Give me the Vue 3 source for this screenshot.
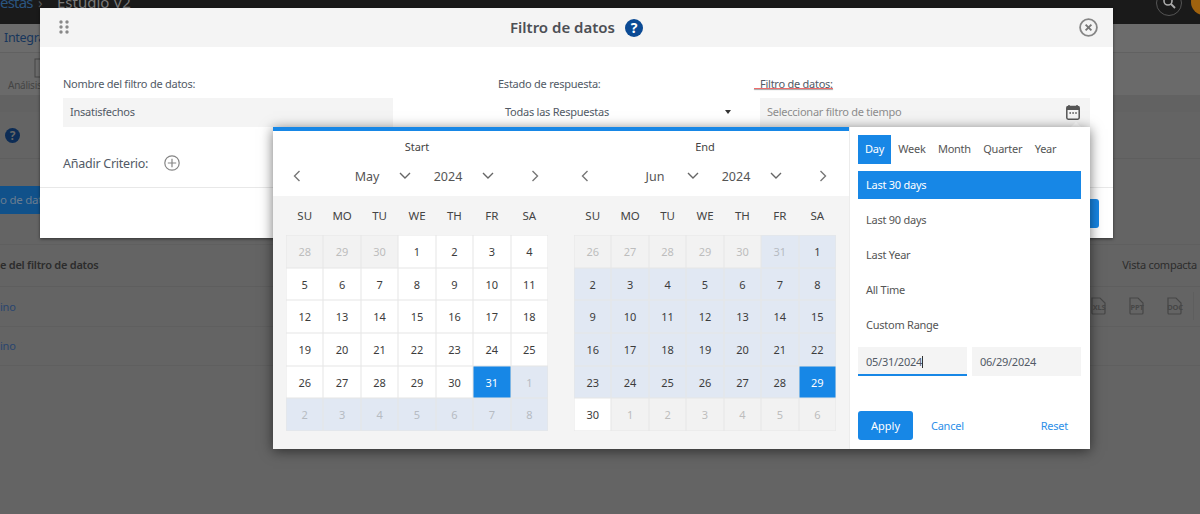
<script setup>
const weekdays = ['SU', 'MO', 'TU', 'WE', 'TH', 'FR', 'SA']
const may = [
  ...[28, 29, 30].map(d => ({ d, k: 'off' })),
  ...Array.from({ length: 30 }, (_, i) => ({ d: i + 1, k: '' })),
  { d: 31, k: 'sel' },
  ...[1, 2, 3, 4, 5, 6, 7, 8].map(d => ({ d, k: 'range faint' }))
]
const june = [
  ...[26, 27, 28, 29, 30].map(d => ({ d, k: 'off' })),
  { d: 31, k: 'range faint' },
  ...Array.from({ length: 28 }, (_, i) => ({ d: i + 1, k: 'range' })),
  { d: 29, k: 'sel' },
  { d: 30, k: '' },
  ...[1, 2, 3, 4, 5, 6].map(d => ({ d, k: 'off' }))
]
const calendars = [
  { title: 'Start', month: 'May', days: may },
  { title: 'End', month: 'Jun', days: june }
]
const tabs = ['Day', 'Week', 'Month', 'Quarter', 'Year']
const ranges = ['Last 30 days', 'Last 90 days', 'Last Year', 'All Time', 'Custom Range']
const fileTypes = ['XLS', 'PPT', 'DOC']
</script>

<template>
  <div class="page">
    <div class="topbar">
      <span class="crumb">estas</span>
      <span class="crumb-sep">›</span>
      <span class="crumb-current">Estudio V2</span>
      <svg class="search" viewBox="0 0 26 26" width="26" height="26">
        <circle cx="13" cy="13" r="12.5" fill="none" stroke="#555" />
        <circle cx="12" cy="11" r="4" fill="none" stroke="#aaa" stroke-width="1.6" />
        <path d="M15 14l4 4" stroke="#aaa" stroke-width="1.8" />
      </svg>
      <span class="avatar"></span>
    </div>
    <div class="band-title">Integraciones</div>
    <div class="band-tabs">
      <svg width="12" height="20" viewBox="0 0 12 20"><rect x="1" y="1" width="9" height="18" fill="none" stroke="#444" /></svg>
      <span>Análisis</span>
    </div>
    <div class="band-help"><span class="help-dark">?</span></div>
    <div class="band-action"><span class="action-btn">o de datos</span></div>
    <div class="table-head"><span>e del filtro de datos</span><span class="compact">Vista compacta</span></div>
    <div class="table-row">
      <span class="link">ino</span>
      <div class="files">
        <svg v-for="f in fileTypes" :key="f" class="file" width="17" height="18" viewBox="0 0 17 18">
          <path d="M2 1h8l5 5v10a1 1 0 0 1-1 1H3a1 1 0 0 1-1-1z" fill="none" stroke="#474747" stroke-width="1.2" />
          <text x="9" y="13" text-anchor="middle" class="file-label">{{ f }}</text>
        </svg>
      </div>
    </div>
    <div class="table-row"><span class="link">ino</span></div>

    <div class="modal">
      <header class="modal-head">
        <svg class="grip" width="10" height="14" viewBox="0 0 10 14">
          <g fill="#888">
            <circle cx="2" cy="2" r="1.7" /><circle cx="8" cy="2" r="1.7" />
            <circle cx="2" cy="7" r="1.7" /><circle cx="8" cy="7" r="1.7" />
            <circle cx="2" cy="12" r="1.7" /><circle cx="8" cy="12" r="1.7" />
          </g>
        </svg>
        <h1 class="modal-title">Filtro de datos</h1>
        <span class="help">?</span>
        <svg class="close" width="19" height="19" viewBox="0 0 19 19">
          <circle cx="9.5" cy="9.5" r="8.4" fill="none" stroke="#868686" stroke-width="1.8" />
          <path d="M6.6 6.6l5.8 5.8M12.4 6.6l-5.8 5.8" stroke="#777" stroke-width="1.9" />
        </svg>
      </header>
      <div class="fields">
        <div class="field">
          <label>Nombre del filtro de datos:</label>
          <div class="input">Insatisfechos</div>
        </div>
        <div class="field field-mid">
          <label>Estado de respuesta:</label>
          <div class="select"><span>Todas las Respuestas</span><i class="caret"></i></div>
        </div>
        <div class="field">
          <label><span class="underlined">Filtro de datos:</span></label>
          <div class="input placeholder">
            <span>Seleccionar filtro de tiempo</span>
            <svg class="cal-icon" width="14" height="15" viewBox="0 0 14 15">
              <path d="M3 0v2M11 0v2" stroke="#555" stroke-width="1.4" />
              <rect x="0.8" y="1.6" width="12.4" height="12.6" rx="1.4" fill="none" stroke="#555" stroke-width="1.5" />
              <rect x="0.8" y="1.6" width="12.4" height="3.4" fill="#555" />
              <path d="M3.4 8h1.6M6.3 8h1.6M9.2 8h1.6" stroke="#555" stroke-width="1.6" />
            </svg>
          </div>
        </div>
      </div>
      <div class="criteria">
        <span>Añadir Criterio:</span>
        <svg width="16" height="16" viewBox="0 0 16 16">
          <circle cx="8" cy="8" r="7.2" fill="none" stroke="#858585" stroke-width="1.2" />
          <path d="M8 3.8v8.4M3.8 8h8.4" stroke="#858585" stroke-width="1.2" />
        </svg>
      </div>
      <div class="modal-foot"><span class="foot-btn"></span></div>
    </div>

    <i class="pointer"></i>
    <div class="popover">
      <div class="cal-pane">
        <div class="cal-heads">
          <div v-for="c in calendars" :key="c.title" class="cal-head">
            <div class="cal-title">{{ c.title }}</div>
            <div class="cal-nav">
              <svg class="nav-prev" width="8" height="12" viewBox="0 0 8 12"><path d="M6.5 1L1.5 6l5 5" fill="none" stroke="#777" stroke-width="1.4" /></svg>
              <span class="nav-month">{{ c.month }}</span>
              <svg class="nav-chev1" width="12" height="8" viewBox="0 0 12 8"><path d="M1 1l5 5 5-5" fill="none" stroke="#666" stroke-width="1.4" /></svg>
              <span class="nav-year">2024</span>
              <svg class="nav-chev2" width="12" height="8" viewBox="0 0 12 8"><path d="M1 1l5 5 5-5" fill="none" stroke="#666" stroke-width="1.4" /></svg>
              <svg class="nav-next" width="8" height="12" viewBox="0 0 8 12"><path d="M1.5 1l5 5-5 5" fill="none" stroke="#777" stroke-width="1.4" /></svg>
            </div>
          </div>
        </div>
        <div class="cal-bodies">
          <div v-for="c in calendars" :key="c.title" class="cal-body">
            <div class="weekdays"><span v-for="w in weekdays" :key="w">{{ w }}</span></div>
            <div class="days">
              <span v-for="(x, i) in c.days" :key="i" class="day" :class="x.k">{{ x.d }}</span>
            </div>
          </div>
        </div>
      </div>
      <aside class="side">
        <div class="tabs">
          <span v-for="(t, i) in tabs" :key="t" class="tab" :class="{ active: i === 0 }">{{ t }}</span>
        </div>
        <ul class="ranges">
          <li v-for="(r, i) in ranges" :key="r" :class="{ active: i === 0 }">{{ r }}</li>
        </ul>
        <div class="dates">
          <div class="date focus">05/31/2024<i class="cursor"></i></div>
          <div class="date">06/29/2024</div>
        </div>
        <div class="actions">
          <button class="apply">Apply</button>
          <span class="txt-btn cancel">Cancel</span>
          <span class="txt-btn reset">Reset</span>
        </div>
      </aside>
    </div>
  </div>
</template>

<style>
html, body { margin: 0; background: #646464; }
</style>

<style scoped>
.page {
  position: relative;
  width: 1200px;
  height: 514px;
  overflow: hidden;
  background: #646464;
  font-family: "Noto Sans", sans-serif;
  font-size: 11px;
  letter-spacing: -0.25px;
  color: #525a66;
}
.topbar {
  height: 24px;
  background: #1a1a1a;
  display: flex;
  align-items: flex-start;
  overflow: hidden;
  font-size: 15px;
  line-height: 18px;
}
.crumb { color: #2a5580; margin-top: -7px; width: 38px; flex: none; letter-spacing: -0.8px; }
.crumb-sep { color: #555; margin-top: -7px; width: 19px; flex: none; }
.crumb-current { color: #7b7b7b; margin-top: -7px; letter-spacing: 0; }
.search { margin-left: auto; margin-right: 9px; margin-top: -10px; flex: none; }
.avatar { width: 26px; height: 26px; margin-right: -17px; margin-top: -11px; border-radius: 50%; background: #a0620e; flex: none; }
.band-title { height: 29px; line-height: 27px; padding-left: 4px; background: #6c6c6c; font-size: 12.5px; letter-spacing: -0.3px; color: #17365c; box-sizing: border-box; border-bottom: 1px solid #616161; }
.band-tabs { height: 42px; box-sizing: border-box; padding: 5px 0 0 8px; background: #6a6a6a; color: #444; font-size: 10px; display: flex; flex-direction: column; align-items: flex-start; box-shadow: 0 2px 2px rgba(0,0,0,.12); }
.band-tabs svg { margin-left: 26px; }
.band-help { height: 63px; display: flex; align-items: center; padding-left: 5px; background: #646464; border-top: 17px solid #626262; box-sizing: border-box; }
.help-dark { width: 15px; height: 15px; border-radius: 50%; background: #0d2c55; color: #666; font-weight: 700; font-size: 12px; line-height: 15px; text-align: center; }
.band-action { height: 59px; padding-top: 27px; box-sizing: border-box; border-top: 1px solid #5e5e5e; }
.action-btn { display: block; width: 60px; height: 28px; line-height: 28px; background: #10518a; color: #6a7d90; font-size: 11.5px; border-radius: 0 3px 3px 0; white-space: nowrap; }
.table-head { display: flex; justify-content: space-between; height: 43px; margin-top: 27px; line-height: 40px; font-weight: 600; color: #2c2c2c; border-bottom: 1px solid #5e5e5e; border-top: 1px solid #5f5f5f; box-sizing: border-box; }
.compact { font-weight: 400; padding-right: 3px; }
.table-row { display: flex; justify-content: space-between; align-items: center; height: 39.5px; box-sizing: border-box; border-bottom: 1px solid #5f5f5f; }
.link { color: #29456f; }
.files { display: flex; gap: 21px; height: 28px; align-items: center; padding-right: 10px; margin-right: 6px; border-right: 1px solid #5e5e5e; }
.file { overflow: visible; }
.file-label { font-size: 7.5px; font-weight: 700; fill: #474747; letter-spacing: -0.2px; }

.modal {
  position: absolute;
  left: 40px;
  top: 8px;
  width: 1073px;
  height: 230px;
  background: #fff;
  box-shadow: 0 1px 3px rgba(0,0,0,.5);
  display: flex;
  flex-direction: column;
}
.modal-head {
  height: 39px;
  flex: none;
  background: #f4f4f4;
  display: flex;
  align-items: center;
  justify-content: center;
  gap: 10px;
  position: relative;
}
.grip { position: absolute; left: 19px; top: 12px; }
.close { position: absolute; right: 15px; top: 10px; }
.modal-title { margin: 0 0 2px; font-size: 15px; font-weight: 600; letter-spacing: 0; color: #4c4f55; }
.help { width: 18px; height: 18px; border-radius: 50%; background: #0b4a94; color: #fff; font-weight: 700; font-size: 14px; line-height: 18px; text-align: center; letter-spacing: 0; }
.fields { display: grid; grid-template-columns: 330px 1fr 330px; padding: 30px 23px 0; }
.field label { display: block; height: 14px; line-height: 14px; margin-bottom: 7px; }
.field-mid { padding-left: 105px; padding-right: 21px; }
.input { height: 29px; box-sizing: border-box; background: #f4f4f4; padding: 0 10px 2px 7px; display: flex; justify-content: space-between; align-items: center; }
.cal-icon { margin-top: 2px; }
.placeholder { color: #8d8d8d; }
.select { height: 29px; box-sizing: border-box; display: flex; justify-content: space-between; align-items: center; padding: 0 8px 2px 7px; }
.caret { width: 0; height: 0; border: 3.5px solid transparent; border-top: 4px solid #333; border-bottom: 0; }
.underlined { position: relative; display: inline-block; }
.underlined::after { content: ""; position: absolute; left: -6px; right: 0; bottom: 2px; height: 1px; background: #ef6b6b; box-shadow: 0 1px 1px rgba(0,0,0,.4); }
.criteria { display: flex; align-items: center; gap: 16px; height: 61px; padding: 12px 0 0 23px; box-sizing: border-box; font-size: 12.5px; border-bottom: 1px solid #e8e8e8; }
.modal-foot { flex: 1; display: flex; align-items: center; justify-content: flex-end; padding-right: 14px; }
.foot-btn { width: 40px; height: 29px; background: #1787e6; border-radius: 3px; }

.pointer { position: absolute; left: 1071px; top: 122px; border: 5px solid transparent; border-bottom: 5px solid #fff; border-top: 0; }
.popover {
  position: absolute;
  left: 273px;
  top: 127px;
  width: 817px;
  height: 322px;
  background: #fff;
  display: flex;
  box-shadow: 0 2px 12px rgba(0,0,0,.55);
}
.cal-pane { width: 576px; flex: none; border-top: 4px solid #1787e6; box-sizing: border-box; display: flex; flex-direction: column; background: #f4f4f4; }
.cal-heads { height: 65px; flex: none; background: #fff; display: flex; gap: 26px; padding: 0 13px; }
.cal-head { width: 262px; }
.cal-title { text-align: center; padding-top: 9px; height: 14px; line-height: 14px; color: #444; letter-spacing: 0; }
.cal-nav { display: flex; align-items: center; height: 20px; margin-top: 12px; font-size: 12.5px; letter-spacing: 0; color: #555; }
.nav-prev { margin-left: 7px; }
.nav-month { width: 38px; margin-left: 47px; text-align: center; }
.nav-chev1 { margin-left: 13px; }
.nav-year { width: 38px; margin-left: 18px; text-align: center; }
.nav-chev2 { margin-left: 15px; }
.nav-next { margin-left: 37px; }
.cal-bodies { display: flex; gap: 26px; padding: 0 13px; }
.cal-body { width: 262px; }
.weekdays { display: grid; grid-template-columns: repeat(7, 1fr); height: 39px; align-items: center; text-align: center; color: #444; font-size: 11.5px; letter-spacing: 0; }
.days { display: grid; grid-template-columns: repeat(7, 1fr); grid-auto-rows: 32.7px; }
.day {
  display: flex;
  align-items: center;
  justify-content: center;
  background: #fff;
  color: #3c3c3c;
  font-size: 11px;
  letter-spacing: 0;
  box-shadow: inset 0 0 0 .5px #e6e6e6;
}
.day.off { background: #f2f2f2; color: #bdbdbd; }
.day.range { background: #e1e8f3; color: #3c3c3c; }
.day.faint { color: #b6bbc2; }
.day.sel { background: #1787e6; color: #fff; }

.side { flex: 1; border-left: 1px solid #ececec; padding: 8px 9px 0 8px; display: flex; flex-direction: column; }
.tabs { display: flex; height: 29px; align-items: center; color: #555; }
.tab { padding: 0 6.2px; height: 29px; line-height: 28px; }
.tab.active { padding: 0 7px; margin-right: 1px; background: #1787e6; color: #fff; }
.ranges { list-style: none; margin: 7px 0 0; padding: 0; color: #555; }
.ranges li { height: 35.2px; line-height: 35px; padding-left: 8px; }
.ranges li.active { height: 28px; line-height: 28px; background: #1787e6; color: #fff; margin-bottom: 2.5px; }
.dates { display: flex; gap: 5px; margin-top: 5px; }
.date { width: 109px; height: 29px; line-height: 29px; background: #f4f4f4; padding-left: 8px; box-sizing: border-box; }
.date.focus { border-bottom: 2px solid #1787e6; }
.cursor { display: inline-block; width: 1px; height: 12px; background: #333; vertical-align: -2px; }
.actions { display: flex; align-items: center; margin-top: 35px; }
.apply { width: 55px; height: 29px; border: 0; border-radius: 3px; background: #1787e6; color: #fff; font: inherit; padding: 0; }
.txt-btn { color: #2d8fe8; }
.cancel { margin-left: 18px; }
.reset { margin-left: auto; margin-right: 13px; }
</style>
